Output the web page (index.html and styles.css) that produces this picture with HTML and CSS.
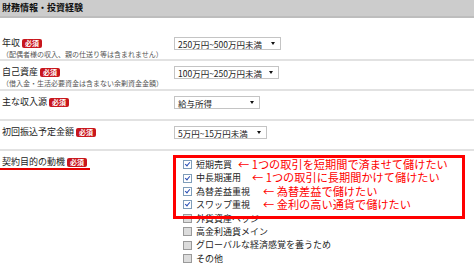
FILE: index.html
```html
<!DOCTYPE html>
<html lang="ja">
<head>
    <meta charset="UTF-8">
    <meta name="viewport" content="width=device-width, initial-scale=1.0">
    <title>財務情報・投資経験</title>
    <link rel="stylesheet" href="styles.css">
</head>
<body>

<div class="section-title">財務情報・投資経験</div>

<div class="form">
    <div class="row first">
        <div class="label">
            <div class="name">年収<span class="req">必須</span></div>
            <div class="sub">（配偶者様の収入、親の仕送り等は含まれません）</div>
        </div>
        <div class="select w1"><span>250万円~500万円未満</span><i class="caret"></i></div>
    </div>

    <div class="row">
        <div class="label">
            <div class="name">自己資産<span class="req">必須</span></div>
            <div class="sub">（借入金・生活必要資金は含まない余剰資金金額）</div>
        </div>
        <div class="select w2"><span>100万円~250万円未満</span><i class="caret"></i></div>
    </div>

    <div class="row">
        <div class="label">
            <div class="name">主な収入源<span class="req">必須</span></div>
        </div>
        <div class="select w3"><span>給与所得</span><i class="caret"></i></div>
    </div>

    <div class="row">
        <div class="label">
            <div class="name">初回振込予定金額<span class="req">必須</span></div>
        </div>
        <div class="select w4"><span>5万円~15万円未満</span><i class="caret"></i></div>
    </div>

    <div class="row last">
        <div class="label">
            <div class="name"><span class="marked">契約目的の動機<span class="req">必須</span></span></div>
        </div>
        <div class="checks">
            <div class="check"><span class="box on"></span>短期売買<span class="note n1">← 1つの取引を短期間で済ませて儲けたい</span></div>
            <div class="check"><span class="box on"></span>中長期運用<span class="note n2">← 1つの取引に長期間かけて儲けたい</span></div>
            <div class="check"><span class="box on"></span>為替差益重視<span class="note n3">← 為替差益で儲けたい</span></div>
            <div class="check"><span class="box on"></span>スワップ重視<span class="note n3">← 金利の高い通貨で儲けたい</span></div>
            <div class="check"><span class="box"></span>外貨資産ヘッジ</div>
            <div class="check"><span class="box"></span>高金利通貨メイン</div>
            <div class="check"><span class="box"></span>グローバルな経済感覚を養うため</div>
            <div class="check"><span class="box"></span>その他</div>
            <div class="redbox"></div>
        </div>
    </div>
</div>

</body>
</html>
```

FILE: styles.css
```css
body {
    margin: 0;
    background: #fff;
    color: #222;
    font-family: "Noto Sans CJK JP", "Noto Sans", sans-serif;
    font-size: 9px;
    overflow: hidden;
}

.section-title {
    height: 16px;
    line-height: 16px;
    padding-left: 2px;
    background: #cccccc;
    border-bottom: 2px solid #bdbdbd;
    font-weight: bold;
    font-size: 9px;
    color: #111;
}

.row {
    display: flex;
    align-items: flex-start;
    min-height: 23px;
    padding: 5px 0 0 2px;
    border-bottom: 2px solid #e2e2e2;
}

.row.first {
    padding-top: 19px;
    min-height: 22px;
}

.row.last {
    border-bottom: none;
    padding-top: 5px;
}

.label {
    width: 172px;
    flex-shrink: 0;
}

.name {
    line-height: 12px;
    white-space: nowrap;
}

.sub {
    font-size: 7px;
    line-height: 10px;
    color: #555;
    white-space: nowrap;
}

.req {
    display: inline-block;
    margin-left: 2px;
    padding: 0 3px;
    height: 9px;
    line-height: 9px;
    font-size: 7px;
    font-weight: bold;
    color: #fff;
    background: #c8161d;
    border-radius: 2px;
    vertical-align: 0;
}

.marked {
    display: inline-block;
    margin-left: -2px;
    padding: 0 3px 0 2px;
    border-bottom: 2px solid #e60000;
    line-height: 12px;
}

.select {
    display: flex;
    align-items: center;
    justify-content: space-between;
    box-sizing: border-box;
    height: 13px;
    padding: 0 5px 0 3px;
    border: 1px solid #c4c4c4;
    background: #fff;
    font-size: 8.5px;
    white-space: nowrap;
}

.w1 { width: 107px; }
.w2 { width: 105px; }
.w3 { width: 86px; }
.w4 { width: 93px; }

.caret {
    width: 0;
    height: 0;
    border-left: 2.5px solid transparent;
    border-right: 2.5px solid transparent;
    border-top: 3px solid #111;
}

.checks {
    position: relative;
    margin: 2px 0 0 9px;
}

.check {
    display: flex;
    align-items: center;
    height: 13.4px;
    line-height: 13.4px;
    white-space: nowrap;
}

.box {
    box-sizing: border-box;
    width: 9px;
    height: 9px;
    margin-right: 4px;
    border: 1px solid #9a9a9a;
    background: #dcdcdc;
    position: relative;
}

.box.on {
    border-color: #7f9db9;
    background: #fff;
}

.box.on::after {
    content: "";
    position: absolute;
    left: 2px;
    top: 0px;
    width: 2px;
    height: 4px;
    border-right: 1.5px solid #2a4fb5;
    border-bottom: 1.5px solid #2a4fb5;
    transform: rotate(40deg);
}

.note {
    color: #f00;
    font-size: 11.2px;
    line-height: 13.4px;
}

.n1 { margin-left: 6px; }
.n2 { margin-left: 11px; }
.n3 { margin-left: 13px; }

.redbox {
    position: absolute;
    left: -10px;
    top: -3px;
    width: 292px;
    height: 64px;
    box-sizing: border-box;
    border: 3px solid #f00;
}
```
